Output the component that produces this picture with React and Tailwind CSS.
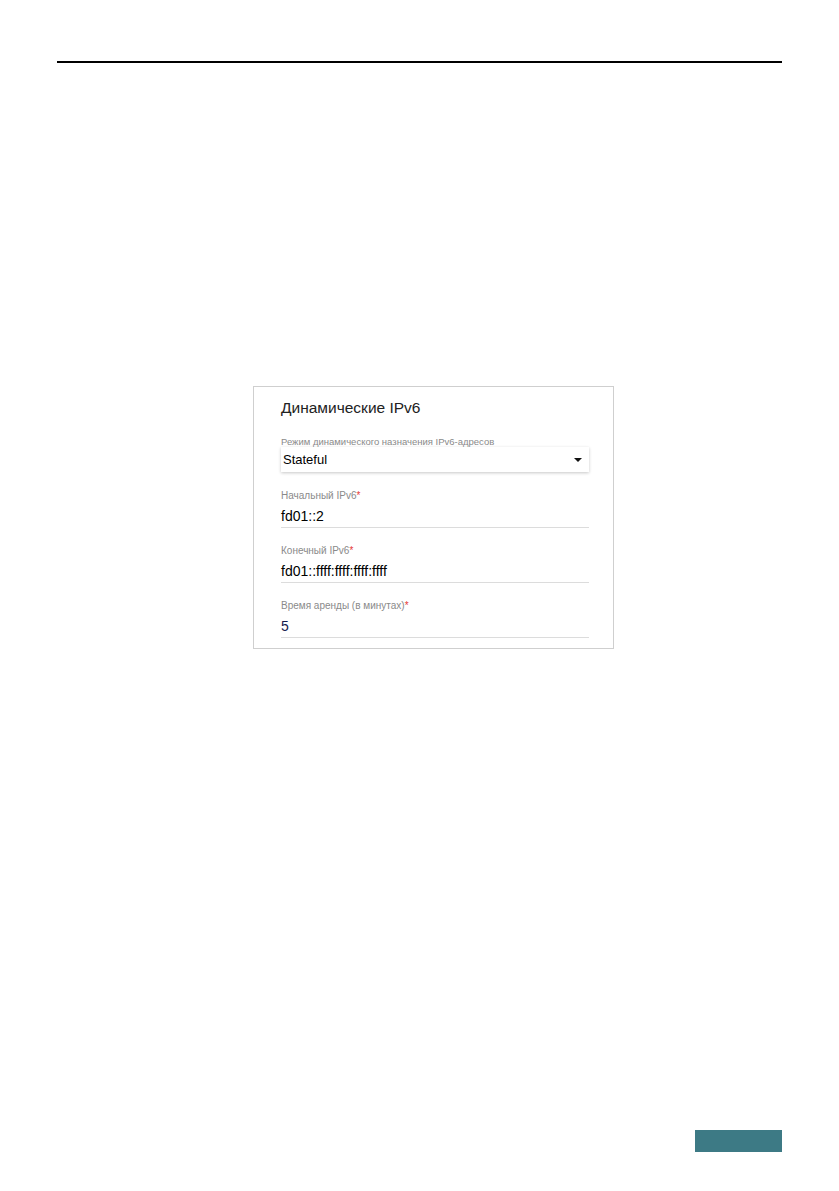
export default function App() {
  const fields = [
    { label: "Начальный IPv6", value: "fd01::2" },
    { label: "Конечный IPv6", value: "fd01::ffff:ffff:ffff:ffff" },
    { label: "Время аренды (в минутах)", value: "5", accent: true },
  ];

  return (
    <div className="w-[839px] h-[1191px] bg-white flex flex-col font-['Liberation_Sans',Arial,sans-serif]">
      {/* Header rule */}
      <div className="px-[57px] pt-[61px]">
        <div className="h-[2px] bg-black" />
      </div>

      {/* Card */}
      <div className="ml-[253px] mt-[323px] w-[361px] border border-[#cfcfcf] pl-[27px] pr-[24px] pt-[12px] pb-[10px]">
        <div className="text-[15.5px] leading-[18px] text-[#222]">Динамические IPv6</div>

        <div className="mt-[19px] text-[9.5px] leading-[11px] text-[#8a8a8a]">
          Режим динамического назначения IPv6-адресов
        </div>
        <div className="h-[25px] flex items-center justify-between pl-[2px] pr-[7px] bg-white shadow-[0_1px_3px_rgba(0,0,0,0.22)]">
          <span className="text-[13px] text-black">Stateful</span>
          <svg width="8" height="4" viewBox="0 0 8 4">
            <path d="M0 0h8L4 4z" fill="#111" />
          </svg>
        </div>

        {fields.map((f, i) => (
          <div key={f.label} className={i === 0 ? "mt-[18px]" : "mt-[17px]"}>
            <div className="text-[10px] leading-[12px] text-[#8a8a8a]">
              {f.label}
              <span className="text-[#e53935]">*</span>
            </div>
            <div
              className={
                "mt-[6px] text-[14px] leading-[16px] pb-[3px] border-b border-[#dcdcdc] " +
                (f.accent ? "text-[#141b4d] font-medium" : "text-black")
              }
            >
              {f.value}
            </div>
          </div>
        ))}
      </div>

      {/* Footer tab */}
      <div className="mt-auto mb-[39px] mr-[57px] self-end w-[87px] h-[22px] bg-[#3d7a85]" />
    </div>
  );
}
